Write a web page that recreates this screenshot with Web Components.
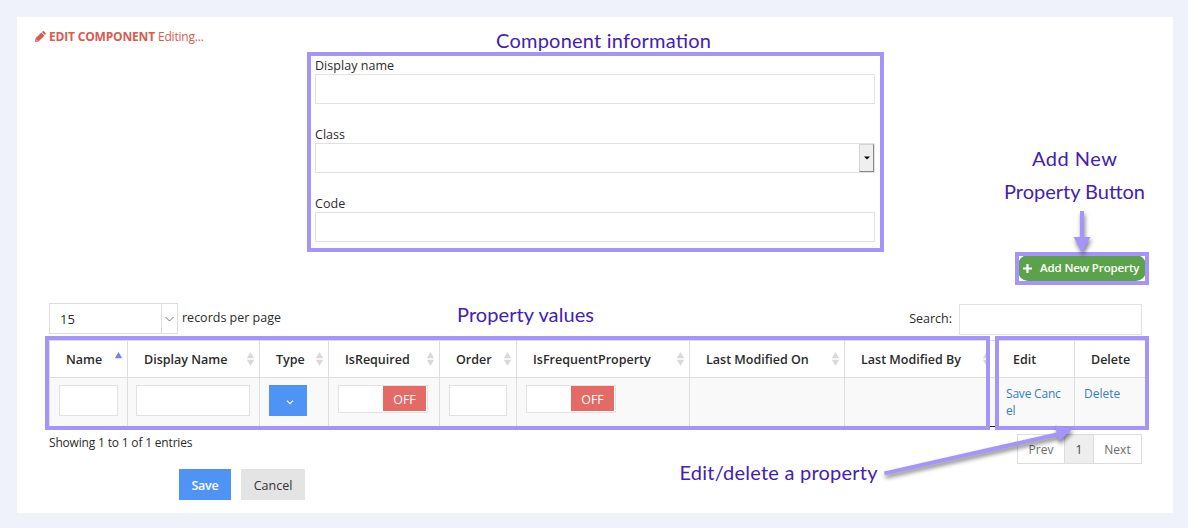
<!DOCTYPE html>
<html lang="en">
<head>
<meta charset="utf-8">
<title>Edit component</title>
<style>
html,body{margin:0;height:100%}
body{background:#eff2fb;font:12.5px/18px "Open Sans",sans-serif;color:#2b2b2b;overflow:hidden}
</style>
</head>
<body>
<component-editor></component-editor>
<script>
const define = (name, html) => customElements.define(name, class extends HTMLElement {
  connectedCallback() {
    if (this.shadowRoot) return;
    const t = document.createElement('template');
    t.innerHTML = '<style>*{box-sizing:border-box}</style>' + html;
    this.attachShadow({mode: 'open'}).append(t.content.cloneNode(true));
  }
});

define('text-box', `<style>:host{display:block;box-sizing:border-box;height:31px;background:#fff;border:1px solid #e2e2e2}</style>`);

define('form-field', `<style>
:host{display:block;height:69px}
label{display:block;height:18px;line-height:20px;letter-spacing:.04px}
.box{display:flex;justify-content:flex-end;height:30px;border:1px solid #e2e2e2;background:#fff}
</style><label><slot name="label"></slot></label><div class="box"><slot></slot></div>`);

define('drop-button', `<style>
:host{display:flex;box-sizing:border-box;width:15px;height:28px;align-items:center;justify-content:center;background:#efefef;border:1px solid #d4d4d4;border-right-color:#888;border-bottom-color:#888}
</style><svg width="6" height="4" viewBox="0 0 6 4"><path d="M0 .5h6L3 3.5z" fill="#000"/></svg>`);

define('panel-title', `<style>
:host{display:flex;align-items:center;height:18px;line-height:19px;color:#db5951;font-size:12px;letter-spacing:-.18px}
svg{margin-right:3px}b{margin-right:3px;font-weight:700}
</style><svg width="11" height="11" viewBox="0 0 11 11"><path fill="#db5951" fill-rule="evenodd" d="M6.900 1.100 7.700.4Q8.400-.2 9.100.4L10.600 1.900q.6.700 0 1.400L9.900 4.100zM6.300 1.600 9.400 4.700 3.500 10.600 0 11 .4 7.500zM1.400 8.500 1.200 9.800l1.300-.2v-.7h-.8v-.4z"/></svg>
<b><slot name="strong"></slot></b><slot></slot>`);

define('add-button', `<style>
:host{display:flex;box-sizing:border-box;width:128px;height:26px;align-items:center;border-radius:10px;background:#5ba34a;color:#fff;font-size:11.500px;font-weight:600;padding-left:5px;letter-spacing:-.13px;white-space:nowrap}
svg{margin-right:8px}
</style><svg width="9" height="9" viewBox="0 0 9 9"><path d="M4.500 0v9M0 4.500h9" stroke="#fff" stroke-width="2.200"/></svg><slot></slot>`);

define('page-size', `<style>
:host{display:flex;box-sizing:border-box;width:129px;height:31px;border:1px solid #ddd;background:#fff;font-size:13px}
.v{flex:1;padding:1px 0 0 10px;line-height:29px}
.a{width:16px;border-left:1px solid #ddd;display:flex;align-items:center;justify-content:center}
</style><div class="v"><slot></slot></div><div class="a"><svg width="9" height="6" viewBox="0 0 9 6"><path d="M.5 1l4 4 4-4" fill="none" stroke="#777"/></svg></div>`);

define('head-cell', `<style>
:host{display:flex;box-sizing:border-box;border-left:1px solid #ddd;height:37px;align-items:center;padding:0 4px 0 16px;font-weight:600;justify-content:space-between;white-space:nowrap}
span{padding-top:2px}
svg{display:none;flex:none}
:host([sort]) svg{display:block}
:host([sort=asc]) .d{display:none}
:host([sort=asc]) .u{fill:#6f86de}
</style><span><slot></slot></span><svg width="9" height="14" viewBox="0 0 9 14" fill="#d9d9d9"><path class="u" d="M4.500 0 8.200 6.200H.8z"/><path class="d" d="M4.500 14 8.200 7.800H.8z"/></svg>`);

define('body-cell', `<style>
:host{display:block;box-sizing:border-box;border-left:1px solid #ddd;padding:7px 9px 0;height:49px;background:#f9f9f9;color:#3480c4;line-height:17px}
</style><slot></slot>`);

define('type-picker', `<style>
:host{display:flex;width:38px;height:31px;background:#4f94f5;align-items:center;justify-content:center;padding:0}
svg{margin:3px 0 0 4px}
</style><svg width="8" height="5" viewBox="0 0 8 5"><path d="M1 .7l3 3 3-3" fill="none" stroke="#fff" stroke-width="1.100"/></svg>`);

define('toggle-switch', `<style>
:host{display:flex;box-sizing:border-box;width:90px;height:28px;border:1px solid #e2e2e2;background:#fff;justify-content:flex-end;padding-right:1px}
span{width:43px;height:25px;background:#e46a66;color:#fff;text-align:center;line-height:27px}
</style><span><slot></slot></span>`);

define('property-table', `<style>
:host{display:grid;grid-template-columns:78px 132px 69px 111px 77px 173px 155px 151px 79px 72px;border-top:1px solid #ddd;border-bottom:1px solid #222;width:1097px;grid-template-rows:36px 49px}
body-cell{border-top:1px solid #ddd}
head-cell{height:36px}
.links{padding-top:7px;padding-left:10px;padding-right:0;font-size:12px;letter-spacing:-.2px;white-space:nowrap}
</style>
<head-cell sort="asc">Name</head-cell><head-cell sort>Display Name</head-cell><head-cell sort>Type</head-cell><head-cell sort>IsRequired</head-cell><head-cell sort>Order</head-cell><head-cell sort>IsFrequentProperty</head-cell><head-cell sort>Last Modified On</head-cell><head-cell sort>Last Modified By</head-cell><head-cell style="padding-left:17px">Edit</head-cell><head-cell>Delete</head-cell>
<body-cell><text-box></text-box></body-cell><body-cell style="padding-left:8px"><text-box></text-box></body-cell><body-cell><type-picker></type-picker></body-cell><body-cell><toggle-switch>OFF</toggle-switch></body-cell><body-cell><text-box></text-box></body-cell><body-cell><toggle-switch>OFF</toggle-switch></body-cell><body-cell></body-cell><body-cell></body-cell><body-cell class="links">Save Canc<br>el</body-cell><body-cell class="links" style="padding-left:9px;letter-spacing:-.02px">Delete</body-cell>`);

define('page-nav', `<style>
:host{display:flex;box-sizing:border-box;width:125px;height:30px;border:1px solid #ddd;background:#fff;color:#6c6c6c;font-size:12px;line-height:30px;text-align:center}
span{width:46px}.on{width:30px;background:#eee;color:#444;border:solid #ddd;border-width:0 1px}.n{flex:1}
</style><span>Prev</span><span class="on">1</span><span class="n">Next</span>`);

define('push-button', `<style>
:host{display:block;box-sizing:border-box;width:64px;height:31px;line-height:33px;text-align:center;background:#e4e4e4;color:#333}
:host([primary]){width:52px;background:#4f94f5;color:#fff;font-weight:600;letter-spacing:-.2px}
</style><slot></slot>`);

define('callout-layer', `<style>
:host{position:absolute;left:0;top:0;width:1188px;height:528px;pointer-events:none}
svg{display:block}
text{font:20px Lato,sans-serif;fill:#4320b3}
.b{fill:none;stroke:#a594f9;stroke-width:4}
.a{fill:#a594f9;filter:drop-shadow(1px 3px 2px rgba(0,0,0,.5))}
</style><svg width="1188" height="528" viewBox="0 0 1188 528">
<rect class="b" x="309" y="54" width="573" height="196"/>
<rect class="b" x="1017" y="254" width="130" height="29"/>
<rect class="b" x="47" y="338" width="941" height="90"/>
<rect class="b" x="997" y="338" width="150" height="90"/>
<path class="a" d="M1080 211h4v26h6.500l-8.500 15.500-8.500-15.500h6.500z"/>
<path class="a" d="M884 471.600 1056.500 432.500 1055.300 425.500 1072.500 429 1059 441.500 1057.500 436.500 884.800 475.200z"/>
<text x="496" y="48" textLength="215">Component information</text>
<text x="1032" y="166" textLength="85">Add New</text>
<text x="1004" y="199" textLength="141">Property Button</text>
<text x="457" y="322" textLength="137">Property values</text>
<text x="679.500" y="480" textLength="198">Edit/delete a property</text>
</svg>`);

define('component-editor', `<style>
:host{display:block;padding:17px 15px 15px 17px;height:528px;box-sizing:border-box}
main{height:496px;background:#fff;padding:10px 27px 0 32px;display:flex;flex-direction:column}
panel-title{margin-left:-14px}
.form{width:560px;margin:11px 0 0 266px;height:186px}
.add{display:flex;justify-content:flex-end;margin:13px 0 0}
.tools{display:flex;height:32px;margin-top:22px;align-items:flex-start}
.tools span{line-height:29px;margin-left:4px;font-size:12.500px}
.tools .s{margin-left:auto;margin-right:7px;line-height:31px}
.tools text-box{width:183px;margin:1px 4px 0 0;flex:none}
property-table{margin-top:5px}
.foot{display:flex;justify-content:space-between;height:35px;margin-top:7px;padding-right:4px}
.foot span{line-height:18px;font-size:12px;letter-spacing:-.18px}
.act{display:flex;gap:10px;margin-left:130px}
</style><main>
<panel-title><span slot="strong">EDIT COMPONENT</span>Editing...</panel-title>
<div class="form"><form-field><span slot="label">Display name</span></form-field><form-field><span slot="label">Class</span><drop-button></drop-button></form-field><form-field><span slot="label">Code</span></form-field></div>
<div class="add"><add-button>Add New Property</add-button></div>
<div class="tools"><page-size>15</page-size><span>records per page</span><span class="s">Search:</span><text-box></text-box></div>
<property-table></property-table>
<div class="foot"><span>Showing 1 to 1 of 1 entries</span><page-nav></page-nav></div>
<div class="act"><push-button primary>Save</push-button><push-button>Cancel</push-button></div>
</main><callout-layer></callout-layer>`);
</script>
</body>
</html>
